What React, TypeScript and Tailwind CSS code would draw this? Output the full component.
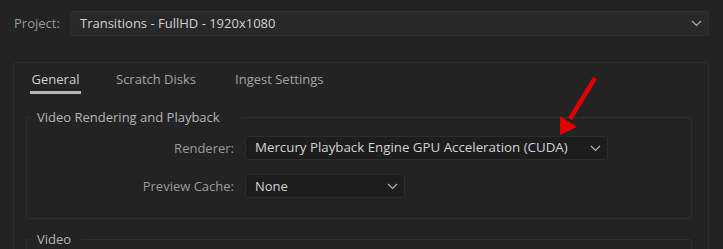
import React from "react";

function Chevron() {
  return (
    <svg width="11" height="7" viewBox="0 0 11 7" className="shrink-0">
      <polyline points="1,1 5.5,5.5 10,1" fill="none" stroke="#b0b0b0" strokeWidth="1.2" />
    </svg>
  );
}

export default function App() {
  return (
    <div
      className="relative w-[723px] h-[249px] overflow-hidden bg-[#232323] text-[13px] leading-none"
      style={{ fontFamily: '"Open Sans", "Noto Sans", sans-serif' }}
    >
      {/* Project row */}
      <div className="flex items-center pt-[11px] pl-[14px] pr-[14px]">
        <div className="w-[56px] text-[#9a9a9a]">Project:</div>
        <div className="flex-1 h-[25px] flex items-center justify-between pl-[9px] pr-[6px] bg-[#282828] border border-[#2f2f2f] rounded-[3px] text-[#d2d2d2]">
          <span>Transitions - FullHD - 1920x1080</span>
          <Chevron />
        </div>
      </div>

      {/* Panel */}
      <div className="mt-[26px] ml-[13px] mr-[14px] h-[200px] border border-[#2e2e2e] rounded-t-[3px]">
        <div className="flex items-start pl-[16px] pt-[10px] h-[32px]">
          <div className="flex flex-col items-center">
            <span className="text-[#cfcfcf] px-[1px]">General</span>
            <div className="mt-[5px] h-[3px] w-[51px] bg-[#b8b8b8]" />
          </div>
          <span className="ml-[35px] text-[#a3a3a3]">Scratch Disks</span>
          <span className="ml-[39px] text-[#a3a3a3]">Ingest Settings</span>
        </div>

        <fieldset className="mt-[16px] ml-[12px] mr-[16px] h-[108px] border border-[#2e2e2e] rounded-[3px]">
          <legend className="ml-[4px] pl-[6px] pr-[22px] text-[#b5b5b5]">Video Rendering and Playback</legend>
          <div className="flex flex-col gap-[14px] pt-[12px]">
            <div className="flex items-center">
              <div className="w-[207px] text-right text-[#9a9a9a]">Renderer:</div>
              <div className="ml-[11px] w-[363px] h-[24px] flex items-center justify-between pl-[9px] pr-[6px] bg-[#1d1d1d] border border-[#2c2c2c] rounded-[3px] text-[#d2d2d2]">
                <span className="text-[13.3px]">Mercury Playback Engine GPU Acceleration (CUDA)</span>
                <Chevron />
              </div>
            </div>
            <div className="flex items-center">
              <div className="w-[207px] text-right text-[#9a9a9a]">Preview Cache:</div>
              <div className="ml-[11px] w-[160px] h-[24px] flex items-center justify-between pl-[9px] pr-[6px] bg-[#1d1d1d] border border-[#2c2c2c] rounded-[3px] text-[#d2d2d2]">
                <span>None</span>
                <Chevron />
              </div>
            </div>
          </div>
        </fieldset>

        <fieldset className="mt-[14px] ml-[12px] mr-[16px] h-[60px] border border-[#2e2e2e] rounded-[3px]">
          <legend className="ml-[4px] pl-[6px] pr-[10px] text-[#b5b5b5]">Video</legend>
        </fieldset>
      </div>

      {/* Red arrow annotation */}
      <svg className="absolute left-0 top-0 pointer-events-none" width="723" height="249">
        <line x1="595" y1="78" x2="570" y2="119" stroke="#e00000" strokeWidth="4.5" strokeLinecap="butt" />
        <polygon points="560,135 560,116 577,127" fill="#e00000" />
      </svg>
    </div>
  );
}
